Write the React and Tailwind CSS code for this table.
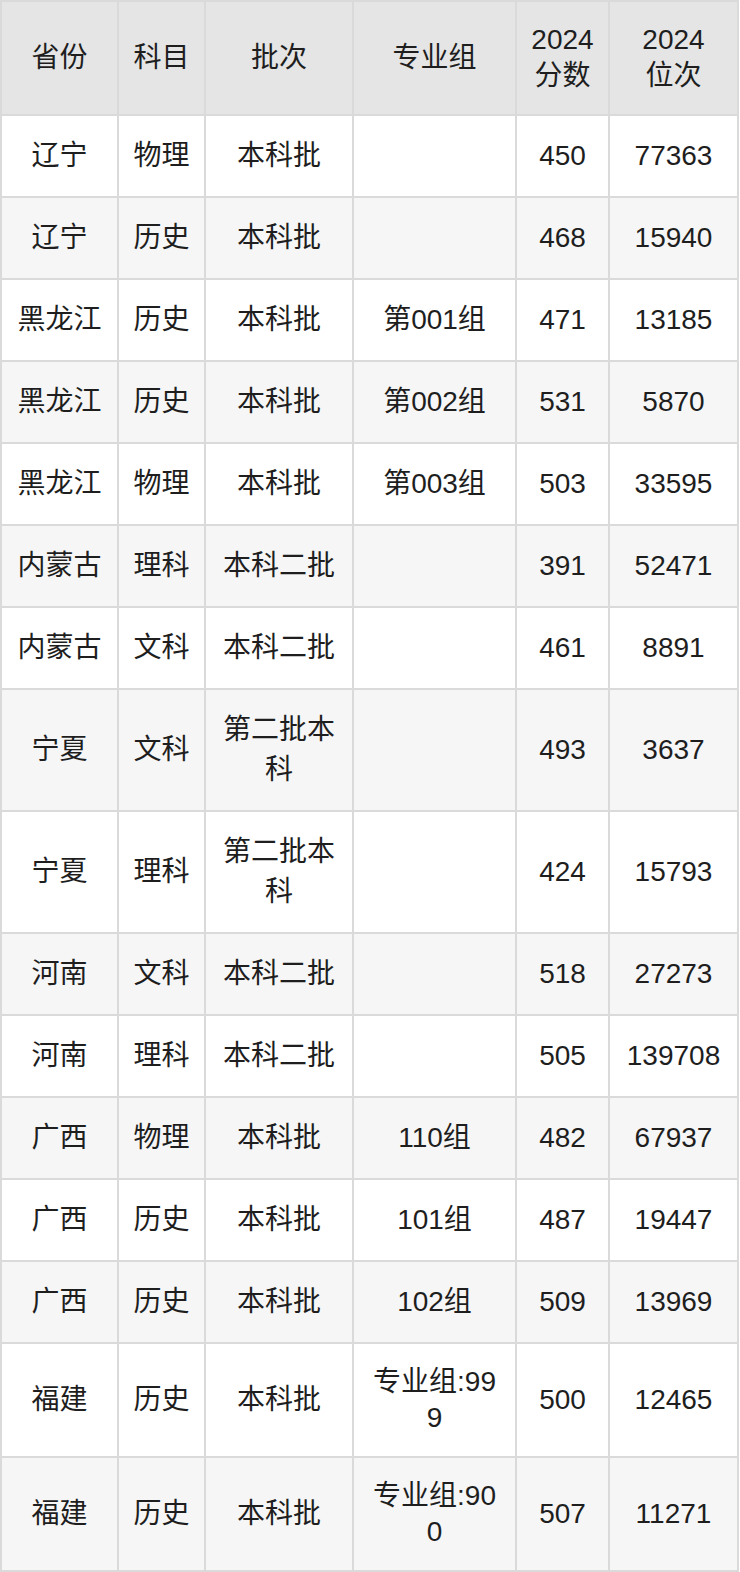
const header = ["省份", "科目", "批次", "专业组", "2024\n分数", "2024\n位次"];

const rows = [
  ["辽宁", "物理", "本科批", "", "450", "77363"],
  ["辽宁", "历史", "本科批", "", "468", "15940"],
  ["黑龙江", "历史", "本科批", "第001组", "471", "13185"],
  ["黑龙江", "历史", "本科批", "第002组", "531", "5870"],
  ["黑龙江", "物理", "本科批", "第003组", "503", "33595"],
  ["内蒙古", "理科", "本科二批", "", "391", "52471"],
  ["内蒙古", "文科", "本科二批", "", "461", "8891"],
  ["宁夏", "文科", "第二批本\n科", "", "493", "3637"],
  ["宁夏", "理科", "第二批本\n科", "", "424", "15793"],
  ["河南", "文科", "本科二批", "", "518", "27273"],
  ["河南", "理科", "本科二批", "", "505", "139708"],
  ["广西", "物理", "本科批", "110组", "482", "67937"],
  ["广西", "历史", "本科批", "101组", "487", "19447"],
  ["广西", "历史", "本科批", "102组", "509", "13969"],
  ["福建", "历史", "本科批", "专业组:99\n9", "500", "12465"],
  ["福建", "历史", "本科批", "专业组:90\n0", "507", "11271"],
];

const rowHeight = (row) => {
  if (row[2].includes("\n")) return "h-[120px] leading-[40px]";
  if (row[3].includes("\n")) return "h-[112px] leading-[36px]";
  return "h-[80px] leading-[40px]";
};

export default function App() {
  return (
    <div className="w-[740px] bg-white font-['Liberation_Sans','Noto_Sans_CJK_SC',sans-serif] text-[28px] text-[#1e1e1e]">
      <div className="grid w-[739px] grid-cols-[115px_85px_146px_161px_91px_127px] gap-[2px] bg-[#dadada] p-[2px]">
        {header.map((h, i) => (
          <div
            key={i}
            className="flex h-[112px] items-center justify-center whitespace-pre-line bg-[#e5e5e5] text-center leading-[36px]"
          >
            {h}
          </div>
        ))}
        {rows.map((row, r) =>
          row.map((cell, c) => (
            <div
              key={r + "-" + c}
              className={
                "flex items-center justify-center whitespace-pre-line text-center " +
                rowHeight(row) +
                (r % 2 === 1 ? " bg-[#f6f6f6]" : " bg-white")
              }
            >
              {cell}
            </div>
          ))
        )}
      </div>
    </div>
  );
}
